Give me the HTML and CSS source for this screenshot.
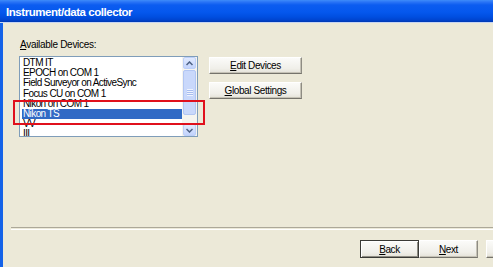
FILE: index.html
```html
<!DOCTYPE html>
<html>
  <head>
    <title>Instrument/data collector</title>
    <link rel="stylesheet" href="styles.css">
  </head>
  <body>
    <div class="window">
      <div class="titlebar">Instrument/data collector</div>

      <div class="client">
        <div class="top">
          <div class="devices">
            <div class="label"><u>A</u>vailable Devices:</div>
            <div class="listwrap">
              <div class="listbox">
                <ul class="items">
                  <li>DTM IT</li>
                  <li>EPOCH on COM 1</li>
                  <li>Field Surveyor on ActiveSync</li>
                  <li>Focus CU on COM 1</li>
                  <li>Nikon on COM 1</li>
                  <li class="selected">Nikon TS</li>
                  <li>VV</li>
                  <li>III</li>
                </ul>
                <div class="scrollbar">
                  <div class="sb-btn">
                    <svg width="7" height="5" viewBox="0 0 7 5"><path d="M0.5 4 L3.5 1 L6.5 4" fill="none" stroke="#4d6185" stroke-width="1.5"/></svg>
                  </div>
                  <div class="sb-track">
                    <div class="sb-thumb"><span class="grip"></span></div>
                  </div>
                  <div class="sb-btn">
                    <svg width="7" height="5" viewBox="0 0 7 5"><path d="M0.5 1 L3.5 4 L6.5 1" fill="none" stroke="#4d6185" stroke-width="1.5"/></svg>
                  </div>
                </div>
              </div>
              <!-- red annotation box drawn over the list -->
              <div class="mark"></div>
            </div>
          </div>

          <div class="side-buttons">
            <button class="btn wide"><u>E</u>dit Devices</button>
            <button class="btn wide"><u>G</u>lobal Settings</button>
          </div>
        </div>

        <div class="separator"></div>

        <div class="footer">
          <button class="btn nav default"><u>B</u>ack</button>
          <button class="btn nav"><u>N</u>ext</button>
          <button class="btn nav cancel"></button>
        </div>
      </div>
    </div>
  </body>
</html>
```

FILE: styles.css
```css
body {
  margin: 0;
  overflow: hidden;
  background-color: #ece9d8;
  font-family: "Liberation Sans", Arial, sans-serif;
  font-size: 10px;
  color: #000;
}
.window {
  width: 560px;
  height: 267px;
  display: flex;
  flex-direction: column;
}
.titlebar {
  height: 23px;
  line-height: 25px;
  padding-left: 6px;
  color: white;
  font-weight: bold;
  font-size: 11.5px;
  letter-spacing: -0.45px;
  background: linear-gradient(
    to bottom,
    #3f8cf9 0px,
    #2a74f6 2px,
    #0c5cf0 5px,
    #0558ee 12px,
    #004ee0 17px,
    #0044cf 20px,
    #0038b0 22px,
    #c6d4f2 22px,
    #c6d4f2 23px
  );
}
.client {
  flex: 1;
  border-left: 3px solid #1462e8;
  display: flex;
  flex-direction: column;
}
.top {
  display: flex;
  padding-left: 16px;
}
.devices {
  margin-top: 16px;
}
.label {
  height: 12px;
  line-height: 12px;
  margin-bottom: 5px;
  letter-spacing: -0.3px;
  padding-left: 1px;
}
.listwrap {
  position: relative;
}
.listbox {
  display: flex;
  width: 177px;
  height: 79px;
  border: 1px solid #7f9db9;
  background-color: white;
  overflow: hidden;
}
.items {
  list-style: none;
  margin: 0;
  padding: 1px 0 0 2px;
  width: 160px;
}
.items li {
  height: 10.2px;
  line-height: 10.2px;
  padding-left: 1px;
  letter-spacing: -0.6px;
  white-space: nowrap;
}
.items li.selected {
  background-color: #316ac5;
  color: white;
}
.scrollbar {
  width: 15px;
  display: flex;
  flex-direction: column;
  background-color: #f5f4ef;
}
.sb-btn {
  height: 12px;
  margin: 0 1px;
  display: flex;
  align-items: center;
  justify-content: center;
  background: linear-gradient(to bottom, #e1eafe, #c2d3fc);
  border: 1px solid #bccff8;
  border-radius: 2px;
  box-sizing: border-box;
}
.sb-track {
  flex: 1;
  padding: 1px 1px 9px 1px;
  display: flex;
}
.sb-thumb {
  flex: 1;
  display: flex;
  align-items: center;
  justify-content: center;
  background-color: #c9d8fb;
  border: 1px solid #b2c6f3;
  border-radius: 2px;
}
.grip {
  width: 6px;
  height: 7px;
  background: repeating-linear-gradient(
    to bottom,
    #eef3fe 0px,
    #eef3fe 1px,
    #a8bdef 1px,
    #a8bdef 2px
  );
}
.mark {
  position: absolute;
  left: -6px;
  top: 44px;
  width: 188px;
  height: 21px;
  border: 2px solid #e0101c;
}
.side-buttons {
  margin-top: 34px;
  margin-left: 11px;
  display: flex;
  flex-direction: column;
  gap: 8px;
}
.btn {
  font-family: "Liberation Sans", Arial, sans-serif;
  font-size: 10px;
  letter-spacing: -0.4px;
  color: #000;
  padding: 0;
  background: linear-gradient(to bottom, #fbfbf9, #f0efe9 70%, #e4e2d8);
  border: 1px solid;
  border-color: #ffffff #8e8c83 #75736b #ffffff;
  box-shadow: inset -1px -1px 0 #c5c2b6;
  box-sizing: border-box;
}
.btn.wide {
  width: 93px;
  height: 17px;
}
.separator {
  margin: 90px 0 0 8px;
  height: 1px;
  border-top: 1px solid #aca899;
  border-bottom: 1px solid #ffffff;
}
.footer {
  margin-top: 10px;
  display: flex;
  justify-content: flex-end;
  padding-right: 15px;
}
.btn.nav {
  width: 59px;
  height: 18px;
}
.btn.default {
  border: 1px solid #3a3a36;
  box-shadow: inset 1px 1px 0 #fff, inset -1px -1px 0 #8e8c83;
}
.btn.cancel {
  margin-left: 8px;
}
```
